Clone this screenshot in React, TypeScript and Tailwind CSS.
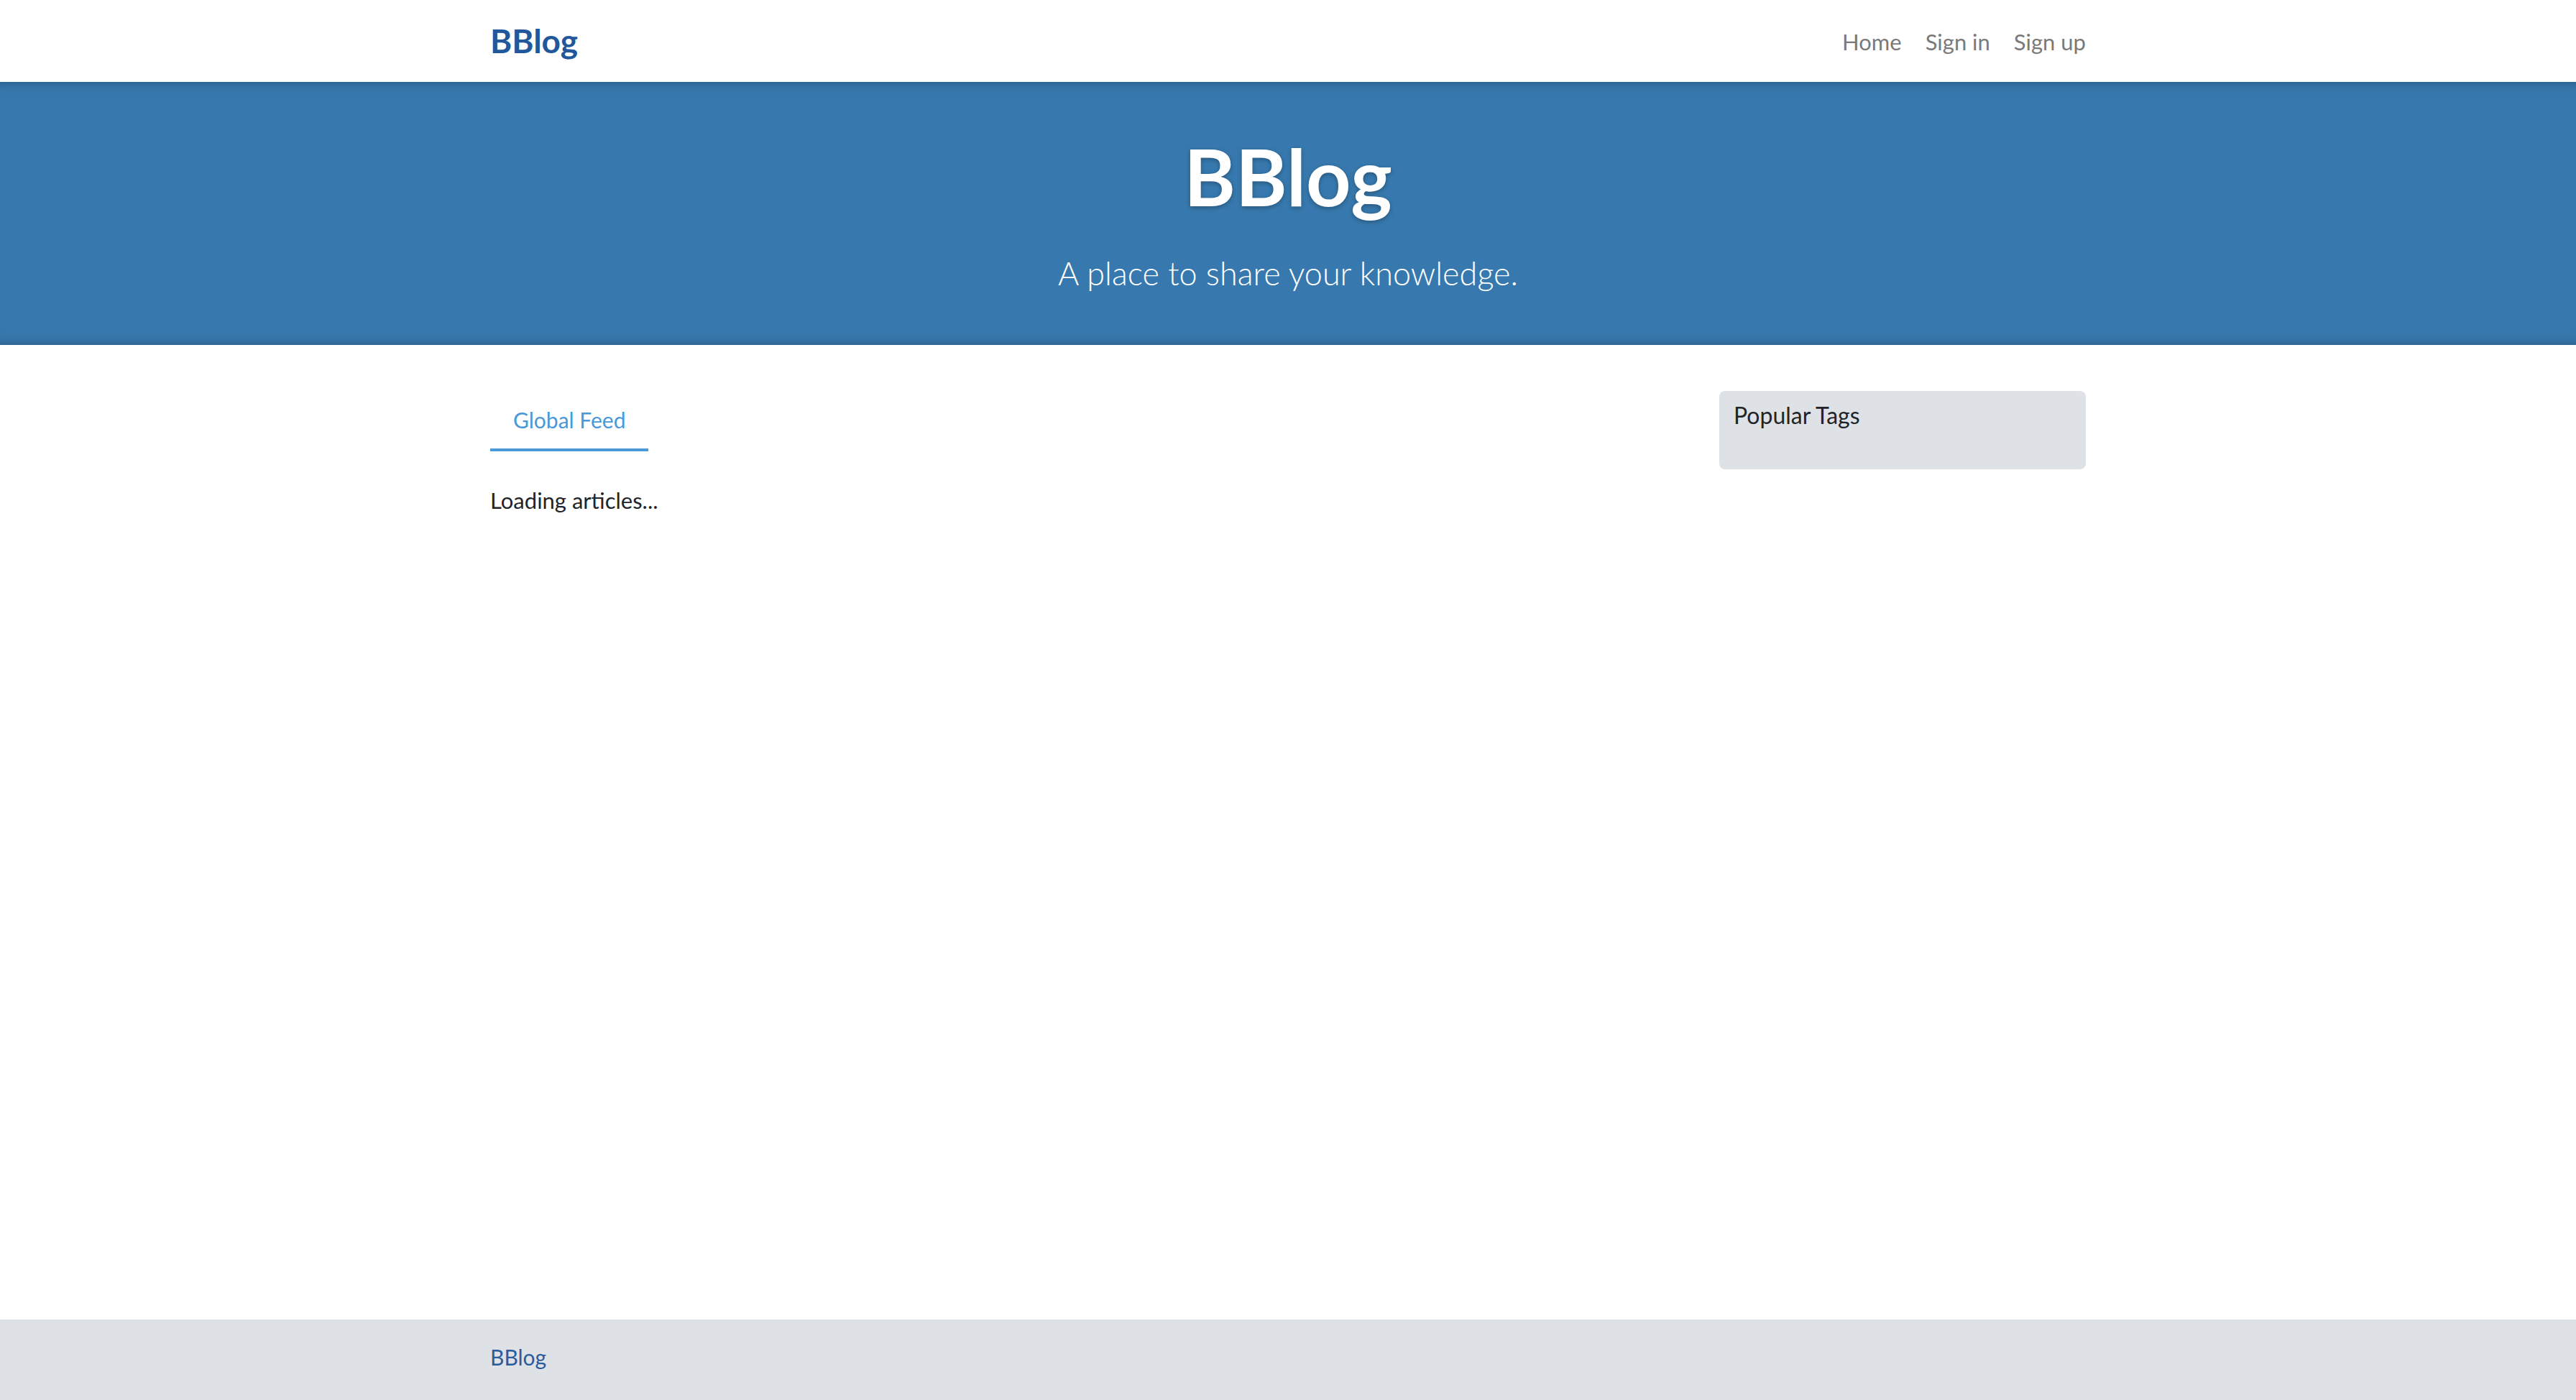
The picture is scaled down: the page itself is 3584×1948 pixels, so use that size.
const navLinks = ["Home", "Sign in", "Sign up"];

function Header() {
  return (
    <nav className="h-[114px] bg-white">
      <div className="mx-auto flex h-full w-[2280px] items-center justify-between px-[30px]">
        <a href="#" className="text-[46px] leading-none font-bold text-[#22579b]">
          BBlog
        </a>
        <ul className="flex items-center gap-[33px] pt-[2px]">
          {navLinks.map((link) => (
            <li key={link}>
              <a href="#" className="text-[31px] text-[#7a7a7a]">
                {link}
              </a>
            </li>
          ))}
        </ul>
      </div>
    </nav>
  );
}

function Banner() {
  return (
    <div className="bg-[#3779ae] py-[64px] text-center text-white shadow-[inset_0_16px_16px_-16px_rgba(0,0,0,0.3),inset_0_-16px_16px_-16px_rgba(0,0,0,0.3)]">
      <h1 className="mb-[32px] text-[109px] leading-[134px] font-bold [text-shadow:0_2px_6px_rgba(0,0,0,0.3)]">
        BBlog
      </h1>
      <p className="text-[45px] leading-[72px] font-light">A place to share your knowledge.</p>
    </div>
  );
}

function Footer() {
  return (
    <footer className="bg-[#dee2e6] pt-[28px] pb-[36px]">
      <div className="mx-auto w-[2280px] px-[30px]">
        <a href="#" className="text-[30px] leading-[48px] text-[#2a5c9d]">
          BBlog
        </a>
      </div>
    </footer>
  );
}

export default function App() {
  return (
    <div className="flex min-h-screen flex-col bg-white font-['Lato',sans-serif] text-[32px] leading-[48px] text-[#212529]">
      <Header />
      <Banner />

      <main className="flex-1">
        <div className="mx-auto mt-[64px] flex w-[2280px] gap-[60px] px-[30px]">
          <div className="w-[1650px]">
            <div className="flex">
              <a href="#" className="border-b-4 border-[#4a98d6] px-[32px] py-[16px] text-[30px] text-[#4a98d6]">
                Global Feed
              </a>
            </div>
            <div className="pt-[44px] text-[31px]">Loading articles...</div>
          </div>

          <aside className="w-[510px]">
            <div className="h-[109px] rounded-[8px] bg-[#dee2e6] px-[20px] pt-[10px]">
              <p>Popular Tags</p>
            </div>
          </aside>
        </div>
      </main>

      <Footer />
    </div>
  );
}
